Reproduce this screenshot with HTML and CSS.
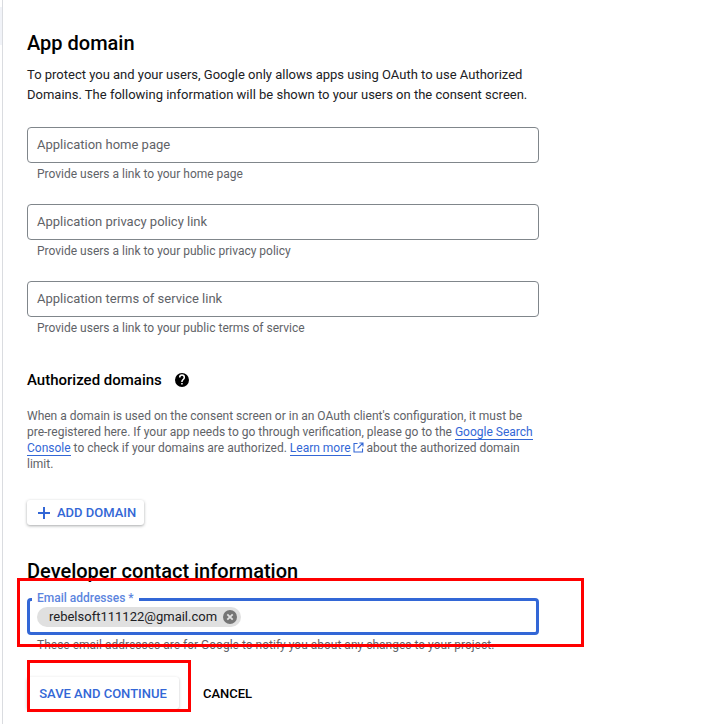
FILE: index.html
```html
<!DOCTYPE html>
<html lang="en">
<head>
  <meta charset="UTF-8" />
  <title>App domain</title>
  <link rel="stylesheet" href="styles.css">
</head>
<body>
  <div class="nav-edge"></div>
  <div class="page">
    <h2 class="title">App domain</h2>
    <p class="intro">To protect you and your users, Google only allows apps using OAuth to use Authorized Domains. The following information will be shown to your users on the consent screen.</p>

    <div class="field">
      <div class="input">Application home page</div>
      <div class="hint">Provide users a link to your home page</div>
    </div>
    <div class="field">
      <div class="input">Application privacy policy link</div>
      <div class="hint">Provide users a link to your public privacy policy</div>
    </div>
    <div class="field">
      <div class="input">Application terms of service link</div>
      <div class="hint">Provide users a link to your public terms of service</div>
    </div>

    <div class="sub-title">
      <h3>Authorized domains</h3>
      <svg class="help" width="16" height="16" viewBox="0 0 24 24"><path fill="#000" d="M12 1.5a10.5 10.5 0 1 0 0 21 10.5 10.5 0 0 0 0-21zm1.100 17.400h-2.300v-2.300h2.300v2.300zm2.400-8.100-1 1.100c-.9.800-1.400 1.500-1.400 3h-2.300v-.6c0-1.200.5-2.300 1.400-3.100l1.400-1.500c.4-.4.700-1 .7-1.600a2.300 2.300 0 0 0-4.600 0H7.400a4.600 4.600 0 0 1 9.200 0c0 1-.4 2-1.100 2.700z"/></svg>
    </div>
    <p class="note">When a domain is used on the consent screen or in an OAuth client's configuration, it must be pre-registered here. If your app needs to go through verification, please go to the <a href="#">Google Search Console</a> to check if your domains are authorized. <a href="#">Learn more</a><svg class="ext" width="11" height="11" viewBox="0 0 12 12"><path fill="none" stroke="#3367d6" stroke-width="1.200" d="M5 1.600H1.100v9.300h9.300V7M7 1.100h3.900V5M10.900 1.100 5 7"/></svg> about the authorized domain limit.</p>

    <button class="btn-add">
      <svg width="14" height="14" viewBox="0 0 14 14"><path fill="#3367d6" d="M6 1h2v5h5v2H8v5H6V8H1V6h5z"/></svg>
      ADD DOMAIN
    </button>

    <h2 class="title dev">Developer contact information</h2>
    <div class="email-field">
      <span class="email-label">Email addresses *</span>
      <span class="chip">rebelsoft111122@gmail.com
        <svg width="14" height="14" viewBox="0 0 14 14"><circle cx="7" cy="7" r="7" fill="#757575"/><path stroke="#e0e0e0" stroke-width="1.800" d="M4.300 4.300l5.400 5.400M9.700 4.300l-5.400 5.400"/></svg>
      </span>
    </div>
    <div class="hint email-hint">These email addresses are for Google to notify you about any changes to your project.</div>

    <div class="actions">
      <button class="btn-save">SAVE AND CONTINUE</button>
      <button class="btn-cancel">CANCEL</button>
    </div>
  </div>

  <div class="mark mark-email"></div>
  <div class="mark mark-save"></div>
</body>
</html>
```

FILE: styles.css
```css
* {
  box-sizing: border-box;
  margin: 0;
  padding: 0;
}

body {
  font-family: Roboto, sans-serif;
  background: #fff;
  height: 724px;
  overflow: hidden;
  position: relative;
}

.nav-edge {
  position: absolute;
  left: 0;
  top: 7px;
  width: 2px;
  height: 38px;
  background: #f1f3f8;
}

.page {
  margin-left: 2px;
  width: 540px;
  height: 724px;
  padding: 31px 0 0 24px;
  border-left: 1px solid #dadce0;
}

.title {
  font-size: 20px;
  line-height: 24px;
  font-weight: 500;
  color: #000;
}

.intro {
  width: 512px;
  margin-top: 10px;
  font-size: 13px;
  line-height: 20px;
  color: #202124;
}

.field {
  width: 512px;
  margin-top: 22px;
}

.input {
  height: 36px;
  border: 1px solid #80868b;
  border-radius: 4px;
  padding-left: 9px;
  font-size: 13px;
  line-height: 34px;
  color: #5f6368;
}

.hint {
  margin-top: 3px;
  padding-left: 10px;
  font-size: 12px;
  line-height: 16px;
  color: #5f6368;
}

.sub-title {
  display: flex;
  align-items: center;
  gap: 12px;
  margin-top: 34px;
  height: 20px;
}

.sub-title h3 {
  font-size: 15px;
  font-weight: 500;
  color: #000;
}

.note {
  width: 512px;
  margin-top: 18px;
  font-size: 12px;
  line-height: 16px;
  color: #5f6368;
}

.note a {
  color: #3367d6;
  text-decoration: none;
  border-bottom: 1px solid #3367d6;
}

.ext {
  margin-left: 2px;
  vertical-align: -1px;
}

.btn-add {
  display: flex;
  align-items: center;
  gap: 6px;
  width: 117px;
  height: 25px;
  margin-top: 28px;
  padding-left: 10px;
  border: none;
  border-radius: 3px;
  background: #fff;
  box-shadow: 0 1px 3px rgba(60, 64, 67, 0.45);
  font-family: Roboto, sans-serif;
  font-size: 13px;
  font-weight: 500;
  color: #3367d6;
}

.dev {
  margin-top: 34px;
}

.email-field {
  display: flex;
  align-items: center;
  position: relative;
  width: 512px;
  height: 37px;
  margin-top: 15px;
  padding-left: 7px;
  border: 3px solid #3367d6;
  border-radius: 4px;
}

.email-label {
  position: absolute;
  left: 2px;
  top: -10px;
  padding: 0 5px;
  background: #fff;
  font-size: 12px;
  font-weight: 500;
  line-height: 14px;
  color: #5c85de;
}

.chip {
  display: flex;
  align-items: center;
  gap: 6px;
  height: 20px;
  padding: 0 4px 0 12px;
  border-radius: 10px;
  background: #e0e0e0;
  font-size: 13px;
  color: #202124;
}

.email-hint {
  margin-top: 2px;
}

.actions {
  display: flex;
  gap: 12px;
  margin-top: 24px;
}

.actions button {
  height: 32px;
  border: none;
  background: #fff;
  font-family: Roboto, sans-serif;
  font-size: 13px;
  font-weight: 500;
}

.btn-save {
  width: 152px;
  border-radius: 3px;
  color: #3367d6;
  box-shadow: 0 1px 3px rgba(60, 64, 67, 0.3);
}

.btn-cancel {
  width: 73px;
  color: #000;
}

/* red annotation boxes on top of the screenshot */
.mark {
  position: absolute;
  border: 3px solid #f00;
}

.mark-email {
  left: 17px;
  top: 578px;
  width: 567px;
  height: 69px;
}

.mark-save {
  left: 27px;
  top: 660px;
  width: 164px;
  height: 52px;
}
```
